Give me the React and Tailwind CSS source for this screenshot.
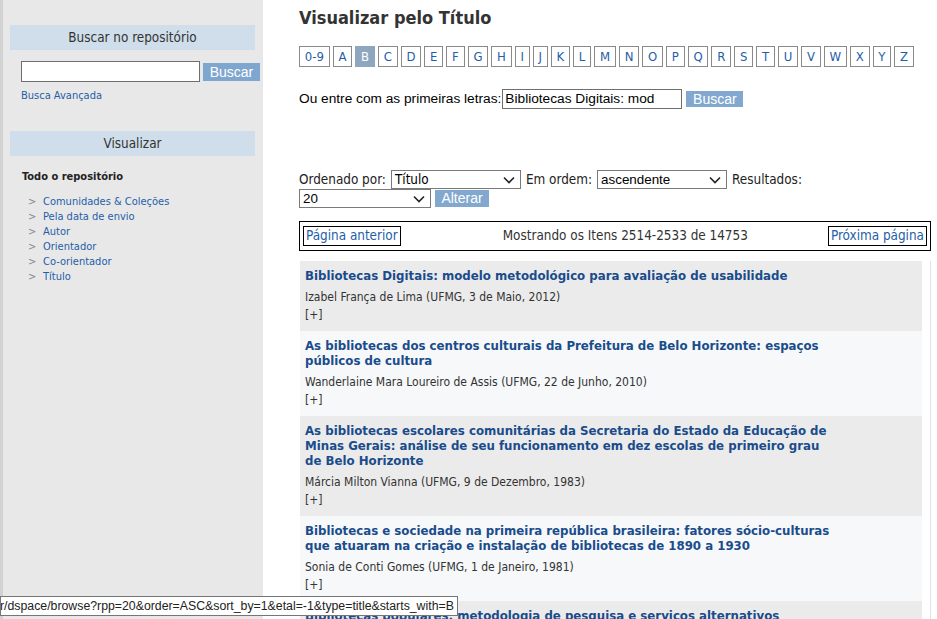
import React from "react";

const T = { fontFamily: '"DejaVu Sans Condensed", "DejaVu Sans", sans-serif' };
const A = { fontFamily: '"Liberation Sans", Arial, sans-serif' };

const letters = ["0-9", ..."ABCDEFGHIJKLMNOPQRSTUVWXYZ".split("")];

const items = [
  {
    title: "Bibliotecas Digitais: modelo metodológico para avaliação de usabilidade",
    author: "Izabel França de Lima (UFMG, 3 de Maio, 2012)",
  },
  {
    title: "As bibliotecas dos centros culturais da Prefeitura de Belo Horizonte: espaços públicos de cultura",
    author: "Wanderlaine Mara Loureiro de Assis (UFMG, 22 de Junho, 2010)",
  },
  {
    title: "As bibliotecas escolares comunitárias da Secretaria do Estado da Educação de Minas Gerais: análise de seu funcionamento em dez escolas de primeiro grau de Belo Horizonte",
    author: "Márcia Milton Vianna (UFMG, 9 de Dezembro, 1983)",
  },
  {
    title: "Bibliotecas e sociedade na primeira república brasileira: fatores sócio-culturas que atuaram na criação e instalação de bibliotecas de 1890 a 1930",
    author: "Sonia de Conti Gomes (UFMG, 1 de Janeiro, 1981)",
  },
  {
    title: "Bibliotecas populares: metodologia de pesquisa e serviços alternativos",
    author: "",
  },
];

function Chevron() {
  return (
    <svg width="12" height="8" viewBox="0 0 12 8" className="shrink-0">
      <path d="M1 1.5 L6 6.5 L11 1.5" fill="none" stroke="#222" strokeWidth="1.6" />
    </svg>
  );
}

function FakeSelect({ value, w, font }) {
  return (
    <div
      className={`flex shrink-0 items-center justify-between border border-[#7a7a7a] bg-white h-[19px] pl-[3px] pr-[5px] text-[13.4px] leading-[17px] text-black ${w}`}
      style={font}
    >
      <span className="leading-[17px]">{value}</span>
      <Chevron />
    </div>
  );
}

export default function App() {
  return (
    <div className="relative flex w-[937px] h-[619px] overflow-hidden bg-white text-[#333]" style={T}>
      <aside className="w-[263px] shrink-0 bg-[#e8e8e8] border-l-[3px] border-[#d2d2d2] pt-[25px] pl-[7px] pr-[8px]">
        <div className="h-[25px] bg-[#cfdeea] text-center text-[13.4px] leading-[25px] text-[#333]">
          Buscar no repositório
        </div>
        <div className="mt-[11px] pl-[11px] flex items-center">
          <div className="w-[179px] shrink-0 h-[21px] border border-[#6e6e6e] bg-white"></div>
          <div
            className="ml-[3px] w-[57px] h-[18px] shrink-0 bg-[#7fa6cf] text-white text-[14px] leading-[18px] text-center"
            style={A}
          >
            Buscar
          </div>
        </div>
        <div className="mt-[7px] pl-[11px] text-[11px] leading-[14px] text-[#1f5ea8]">Busca Avançada</div>
        <div className="mt-[28px] h-[25px] bg-[#cfdeea] text-center text-[13.4px] leading-[25px] text-[#333]">
          Visualizar
        </div>
        <div className="mt-[14px] pl-[12px] text-[11px] leading-[14px] font-bold text-[#222]">Todo o repositório</div>
        <ul className="mt-[10px] pl-[18px] text-[11px] leading-[15px]">
          {["Comunidades & Coleções", "Pela data de envio", "Autor", "Orientador", "Co-orientador", "Título"].map((t) => (
            <li key={t} className="flex">
              <span className="w-[15px] text-[#888]">&gt;</span>
              <span className="text-[#1f5ea8]">{t}</span>
            </li>
          ))}
        </ul>
      </aside>

      <main className="flex-1 pl-[36px] pr-[6px]">
        <h1 className="pt-[6px] text-[18px] leading-[24px] font-bold text-[#333]">Visualizar pelo Título</h1>
        <div className="mt-[16px] flex gap-[3px]">
          {letters.map((l) => (
            <div
              key={l}
              className={
                l === "B"
                  ? "h-[21px] px-[4.8px] border border-[#8ea7bf] bg-[#8ea7bf] text-white text-[13px] leading-[19px]"
                  : "h-[21px] px-[4.8px] border border-[#8a8a8a] text-[#1f5ea8] text-[13px] leading-[19px]"
              }
            >
              {l}
            </div>
          ))}
        </div>

        <div className="mt-[22px] h-[20px] flex items-center text-[13.7px] leading-[18px] text-black" style={A}>
          <span>Ou entre com as primeiras letras:</span>
          <div className="ml-[1px] w-[180px] h-[20px] border border-[#6e6e6e] pl-[2px] leading-[18px]">
            Bibliotecas Digitais: mod
          </div>
          <div className="ml-[4px] w-[57px] h-[16px] bg-[#82a8d0] text-white text-[14px] leading-[16px] text-center">
            Buscar
          </div>
        </div>

        <div className="mt-[61px] h-[19px] flex items-center text-[13.4px] leading-[17px] text-[#222]">
          <span className="mr-[5px]">Ordenado por:</span>
          <FakeSelect value="Título" w="w-[130px]" font={T} />
          <span className="ml-[5px] mr-[5px]">Em ordem:</span>
          <FakeSelect value="ascendente" w="w-[130px]" font={A} />
          <span className="ml-[5px]">Resultados:</span>
        </div>
        <div className="h-[19px] flex items-center">
          <FakeSelect value="20" w="w-[132px]" font={A} />
          <div className="ml-[4px] w-[54px] h-[17px] bg-[#82a8d0] text-white text-[14px] leading-[17px] text-center" style={A}>
            Alterar
          </div>
        </div>

        <div className="mt-[13px] h-[30px] border border-black flex items-center justify-between px-[3px] text-[13.4px] leading-[18px]">
          <div className="h-[20px] border border-black px-[2px] leading-[18px] text-[#1f5ea8]">Página anterior</div>
          <div className="text-[#333] pl-[22px]">Mostrando os Itens 2514-2533 de 14753</div>
          <div className="h-[20px] border border-black px-[2px] leading-[18px] text-[#1f5ea8]">Próxima página</div>
        </div>

        <div className="mt-[10px] ml-[1px] pr-[8px] border-r border-[#e2e2e2]">
          {items.map((it, i) => (
            <div key={i} className={`${i % 2 === 0 ? "bg-[#ebebeb]" : "bg-[#f6f8fa]"} pt-[7px] pb-[8px] pl-[5px]`}>
              <div className="max-w-[532px] text-[13.1px] leading-[15px] font-bold text-[#1a4c8c]">{it.title}</div>
              {it.author && (
                <>
                  <div className="mt-[6px] text-[12px] leading-[16px] text-[#333]">{it.author}</div>
                  <div className="mt-[2px] text-[12px] leading-[16px] text-[#333]">[+]</div>
                </>
              )}
            </div>
          ))}
        </div>
      </main>

      <div
        className="absolute left-0 top-[596px] w-[458px] h-[20px] bg-white border border-[#767676] overflow-hidden whitespace-nowrap text-[12.3px] leading-[18px] text-[#222]"
        style={A}
      >
        <span className="ml-[-1px]">r/dspace/browse?rpp=20&amp;order=ASC&amp;sort_by=1&amp;etal=-1&amp;type=title&amp;starts_with=B</span>
      </div>
    </div>
  );
}
